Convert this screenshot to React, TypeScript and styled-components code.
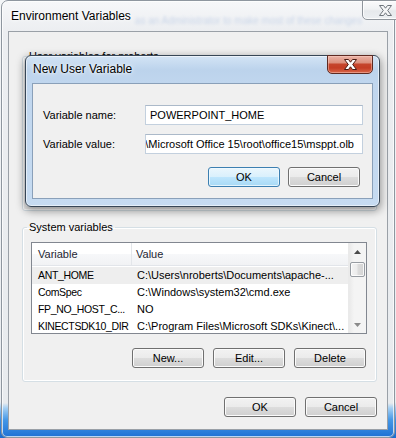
import React from "react";
import styled, { createGlobalStyle } from "styled-components";

type EnvVar = { name: string; value: string };

const systemVars: EnvVar[] = [
  { name: "ANT_HOME", value: "C:\\Users\\nroberts\\Documents\\apache-..." },
  { name: "ComSpec", value: "C:\\Windows\\system32\\cmd.exe" },
  { name: "FP_NO_HOST_C...", value: "NO" },
  { name: "KINECTSDK10_DIR", value: "C:\\Program Files\\Microsoft SDKs\\Kinect\\..." },
];

const GlobalStyle = createGlobalStyle`
  html, body {
    margin: 0;
    padding: 0;
  }
  body {
    width: 396px;
    height: 438px;
    overflow: hidden;
    background: linear-gradient(to bottom, #f3f5f7 0px, #e9ecef 402px, #9cc9f1 408px, #3b8fe3 420px, #1c6bcd 438px);
    font-family: "Liberation Sans", Arial, sans-serif;
    font-size: 11px;
    color: #000;
  }
`;

const Window = styled.div`
  position: relative;
  box-sizing: border-box;
  width: 394px;
  height: 438px;
  margin-left: 1px;
  padding: 0 6px 7px 6px;
  border: 1px solid #8e969f;
  border-radius: 7px 7px 6px 6px;
  background: linear-gradient(to bottom, #f6f7f9 0px, #eceef1 30px, #e8ebee 402px, #a4cff3 407px, #4497e6 419px, #1d6fd3 437px);
  box-shadow: inset 0 0 0 1px rgba(255, 255, 255, 0.7);
  display: flex;
  flex-direction: column;
`;

const TitleBar = styled.div`
  height: 30px;
  display: flex;
  align-items: flex-start;
`;

const Caption = styled.div`
  margin-top: 8px;
  padding-left: 3px;
  font-size: 12px;
  line-height: 15px;
  white-space: nowrap;
  text-shadow: 0 0 6px #fff, 0 0 3px #fff;
`;

// text of the window behind, seen blurred through the glass frame
const GhostText = styled.div`
  margin: 14px 0 0 4px;
  font-size: 10px;
  line-height: 12px;
  white-space: nowrap;
  color: #2f64b8;
  opacity: 0.2;
  filter: blur(1.4px);
`;

const CloseButton = styled.div<{ $active?: boolean }>`
  box-sizing: border-box;
  flex: none;
  width: 46px;
  height: ${(p) => (p.$active ? 19 : 20)}px;
  margin-top: -1px;
  margin-left: auto;
  border: 1px solid ${(p) => (p.$active ? "#5d2a22" : "#8f959c")};
  border-radius: 0 0 5px 5px;
  background: ${(p) =>
    p.$active
      ? "linear-gradient(to bottom, #eab3a6 0%, #dc8f7c 40%, #c5452c 48%, #c43d24 70%, #d9674b 100%)"
      : "linear-gradient(to bottom, #fbfbfc 0%, #f0f2f4 45%, #e6e9ec 55%, #eceff2 100%)"};
  box-shadow: inset 0 0 0 1px ${(p) => (p.$active ? "rgba(255,210,200,0.45)" : "rgba(255,255,255,0.8)")};
  display: flex;
  align-items: center;
  justify-content: center;
`;

const ClientArea = styled.div`
  box-sizing: border-box;
  height: 399px;
  border: 1px solid #9aa0a7;
  background: #f0f0f0;
  padding: 17px 10px 12px 13px;
  display: flex;
  flex-direction: column;
`;

const GroupBox = styled.fieldset<{ $gap?: number }>`
  margin: ${(p) => p.$gap ?? 0}px 0 0 0;
  padding: 8px 9px 13px 8px;
  border: 1px solid #d5dfe5;
  border-radius: 3px;
  box-shadow: inset 0 0 0 1px #fff;
  min-width: 0;
`;

const GroupLabel = styled.legend`
  margin-left: -4px;
  padding: 0 2px;
  line-height: 14px;
  font-size: 11px;
  white-space: nowrap;
`;

const ListView = styled.div`
  box-sizing: border-box;
  height: 92px;
  border: 1px solid #828790;
  background: #fff;
  display: flex;
`;

const ListBody = styled.div`
  flex: 1;
  min-width: 0;
  overflow: hidden;
`;

const ListHeader = styled.div`
  box-sizing: border-box;
  height: 23px;
  display: flex;
  border-bottom: 1px solid #e2e5ea;
  background: linear-gradient(to bottom, #ffffff 0%, #ffffff 50%, #f7f8fa 51%, #f1f2f4 100%);
  margin-bottom: 1px;
`;

const HeaderCell = styled.div<{ $width?: number }>`
  box-sizing: border-box;
  ${(p) => (p.$width ? `width: ${p.$width}px; border-right: 1px solid #e3e6ea;` : "flex: 1;")}
  padding-left: ${(p) => (p.$width ? 6 : 4)}px;
  line-height: 22px;
  color: #1e2633;
  white-space: nowrap;
`;

const Row = styled.div<{ $selected?: boolean }>`
  height: 17px;
  display: flex;
  background: ${(p) => (p.$selected ? "#eeeeee" : "transparent")};
`;

const Cell = styled.div<{ $width?: number }>`
  box-sizing: border-box;
  ${(p) =>
    p.$width
      ? `width: ${p.$width}px; font-size: 10.5px; letter-spacing: -0.35px; padding-left: 6px;`
      : "flex: 1; min-width: 0; padding-left: 5px;"}
  line-height: 17px;
  white-space: nowrap;
  overflow: hidden;
`;

const ScrollBar = styled.div`
  width: 17px;
  display: flex;
  flex-direction: column;
  background: linear-gradient(to right, #e9e9e9 0%, #f4f4f4 30%, #f4f4f4 100%);
  border-left: 1px solid #eaeaea;
`;

const ScrollArrow = styled.div<{ $down?: boolean }>`
  height: 17px;
  display: flex;
  align-items: center;
  justify-content: center;
  margin-top: ${(p) => (p.$down ? "auto" : "0")};
`;

const ScrollThumb = styled.div`
  box-sizing: border-box;
  height: 15px;
  margin: 2px 1px 0 1px;
  border: 1px solid #979ca2;
  border-radius: 2px;
  background: linear-gradient(to right, #f4f4f4 0%, #ececec 45%, #dcdcdc 55%, #d3d3d3 100%);
  box-shadow: inset 0 0 0 1px rgba(255, 255, 255, 0.8);
`;

const ButtonRow = styled.div<{ $top: number; $gap: number; $right?: number }>`
  display: flex;
  justify-content: flex-end;
  gap: ${(p) => p.$gap}px;
  margin-top: ${(p) => p.$top}px;
  margin-right: ${(p) => p.$right ?? 0}px;
`;

const Button = styled.div<{ $default?: boolean }>`
  box-sizing: border-box;
  width: 72px;
  height: 20px;
  border: 1px solid ${(p) => (p.$default ? "#3c7fb1" : "#707070")};
  border-radius: 3px;
  background: ${(p) =>
    p.$default
      ? "linear-gradient(to bottom, #eaf6fd 0%, #d9f0fc 50%, #bee6fd 50%, #a7d9f5 100%)"
      : "linear-gradient(to bottom, #f2f2f2 0%, #ebebeb 50%, #dddddd 50%, #cfcfcf 100%)"};
  box-shadow: inset 0 0 0 1px ${(p) => (p.$default ? "rgba(240,250,255,0.8)" : "#fbfbfb")};
  display: flex;
  align-items: center;
  justify-content: center;
  font-size: 11px;
  color: #000;
`;

const Dialog = styled.div`
  position: absolute;
  left: 23px;
  top: 54px;
  box-sizing: border-box;
  width: 355px;
  height: 152px;
  padding: 0 6px 7px 6px;
  border: 1px solid #374656;
  border-radius: 6px;
  background: linear-gradient(to bottom, #d3e4f5 0px, #bcd3ec 14px, #c0d6ee 27px, #c6dbf1 100%);
  box-shadow: 0 3px 9px 1px rgba(0, 0, 0, 0.4), inset 0 0 0 1px rgba(255, 255, 255, 0.55);
  display: flex;
  flex-direction: column;
`;

const DialogTitleBar = styled.div`
  height: 27px;
  display: flex;
  align-items: flex-start;
`;

const DialogCaption = styled.div`
  margin-top: 6px;
  padding-left: 1px;
  font-size: 12px;
  line-height: 15px;
  text-shadow: 0 0 6px #fff, 0 0 3px #fff;
`;

const DialogClient = styled.div`
  box-sizing: border-box;
  height: 116px;
  border: 1px solid #8aa0b9;
  background: #f0f0f0;
  padding: 21px 9px 11px 10px;
  display: flex;
  flex-direction: column;
`;

const FieldRow = styled.div<{ $top?: number }>`
  display: flex;
  align-items: center;
  margin-top: ${(p) => p.$top ?? 0}px;
`;

const FieldLabel = styled.div`
  width: 102px;
  white-space: nowrap;
`;

const TextBox = styled.div<{ $end?: boolean }>`
  box-sizing: border-box;
  width: 218px;
  height: 20px;
  border: 1px solid #c3d0de;
  border-top-color: #abb9c9;
  background: #fff;
  padding: 0 ${(p) => (p.$end ? 8 : 4)}px 0 4px;
  display: flex;
  align-items: center;
  justify-content: ${(p) => (p.$end ? "flex-end" : "flex-start")};
  overflow: hidden;
  white-space: nowrap;
`;

const CloseGlyph = ({ active }: { active?: boolean }) => (
  <svg width="13" height="11" viewBox="0 0 13 11">
    <path
      d="M0.5 0.5 H4.5 L6.5 3.2 L8.5 0.5 H12.5 L8.7 5.5 L12.5 10.5 H8.5 L6.5 7.8 L4.5 10.5 H0.5 L4.3 5.5 Z"
      fill={active ? "#ffffff" : "#f6f7f8"}
      stroke={active ? "#4a1a12" : "#6f757c"}
      strokeWidth="1"
      strokeLinejoin="round"
    />
  </svg>
);

const ArrowGlyph = ({ down }: { down?: boolean }) => (
  <svg width="7" height="4" viewBox="0 0 7 4">
    <path d={down ? "M0 0 H7 L3.5 4 Z" : "M0 4 H7 L3.5 0 Z"} fill={down ? "#8a8a8a" : "#4a4a4a"} />
  </svg>
);

const VariableList = ({ rows, selected }: { rows: EnvVar[]; selected?: number }) => (
  <ListView>
    <ListBody>
      <ListHeader>
        <HeaderCell $width={100}>Variable</HeaderCell>
        <HeaderCell>Value</HeaderCell>
      </ListHeader>
      {rows.map((r, i) => (
        <Row key={r.name} $selected={i === selected}>
          <Cell $width={100}>{r.name}</Cell>
          <Cell>{r.value}</Cell>
        </Row>
      ))}
    </ListBody>
    <ScrollBar>
      <ScrollArrow>
        <ArrowGlyph />
      </ScrollArrow>
      <ScrollThumb />
      <ScrollArrow $down>
        <ArrowGlyph down />
      </ScrollArrow>
    </ScrollBar>
  </ListView>
);

const VariableGroup = ({ title, rows, gap, selected }: { title: string; rows: EnvVar[]; gap?: number; selected?: number }) => (
  <GroupBox $gap={gap}>
    <GroupLabel>{title}</GroupLabel>
    <VariableList rows={rows} selected={selected} />
    <ButtonRow $top={14} $gap={9} $right={1}>
      <Button>New...</Button>
      <Button>Edit...</Button>
      <Button>Delete</Button>
    </ButtonRow>
  </GroupBox>
);

export default function App() {
  return (
    <>
      <GlobalStyle />
      <Window>
        <TitleBar>
          <Caption>Environment Variables</Caption>
          <GhostText>as an Administrator to make most of these changes</GhostText>
          <CloseButton>
            <CloseGlyph />
          </CloseButton>
        </TitleBar>
        <ClientArea>
          {/* user list sits under the modal dialog; its rows are hidden there */}
          <VariableGroup title="User variables for nroberts" rows={[]} />
          <VariableGroup title="System variables" rows={systemVars} gap={9} selected={0} />
          <ButtonRow $top={15} $gap={9}>
            <Button>OK</Button>
            <Button>Cancel</Button>
          </ButtonRow>
        </ClientArea>

        <Dialog>
          <DialogTitleBar>
            <DialogCaption>New User Variable</DialogCaption>
            <CloseButton $active>
              <CloseGlyph active />
            </CloseButton>
          </DialogTitleBar>
          <DialogClient>
            <FieldRow>
              <FieldLabel>Variable name:</FieldLabel>
              <TextBox>POWERPOINT_HOME</TextBox>
            </FieldRow>
            <FieldRow $top={9}>
              <FieldLabel>Variable value:</FieldLabel>
              <TextBox $end>C:\Program Files\Microsoft Office 15\root\office15\msppt.olb</TextBox>
            </FieldRow>
            <ButtonRow $top={13} $gap={8} $right={3}>
              <Button $default>OK</Button>
              <Button>Cancel</Button>
            </ButtonRow>
          </DialogClient>
        </Dialog>
      </Window>
    </>
  );
}
